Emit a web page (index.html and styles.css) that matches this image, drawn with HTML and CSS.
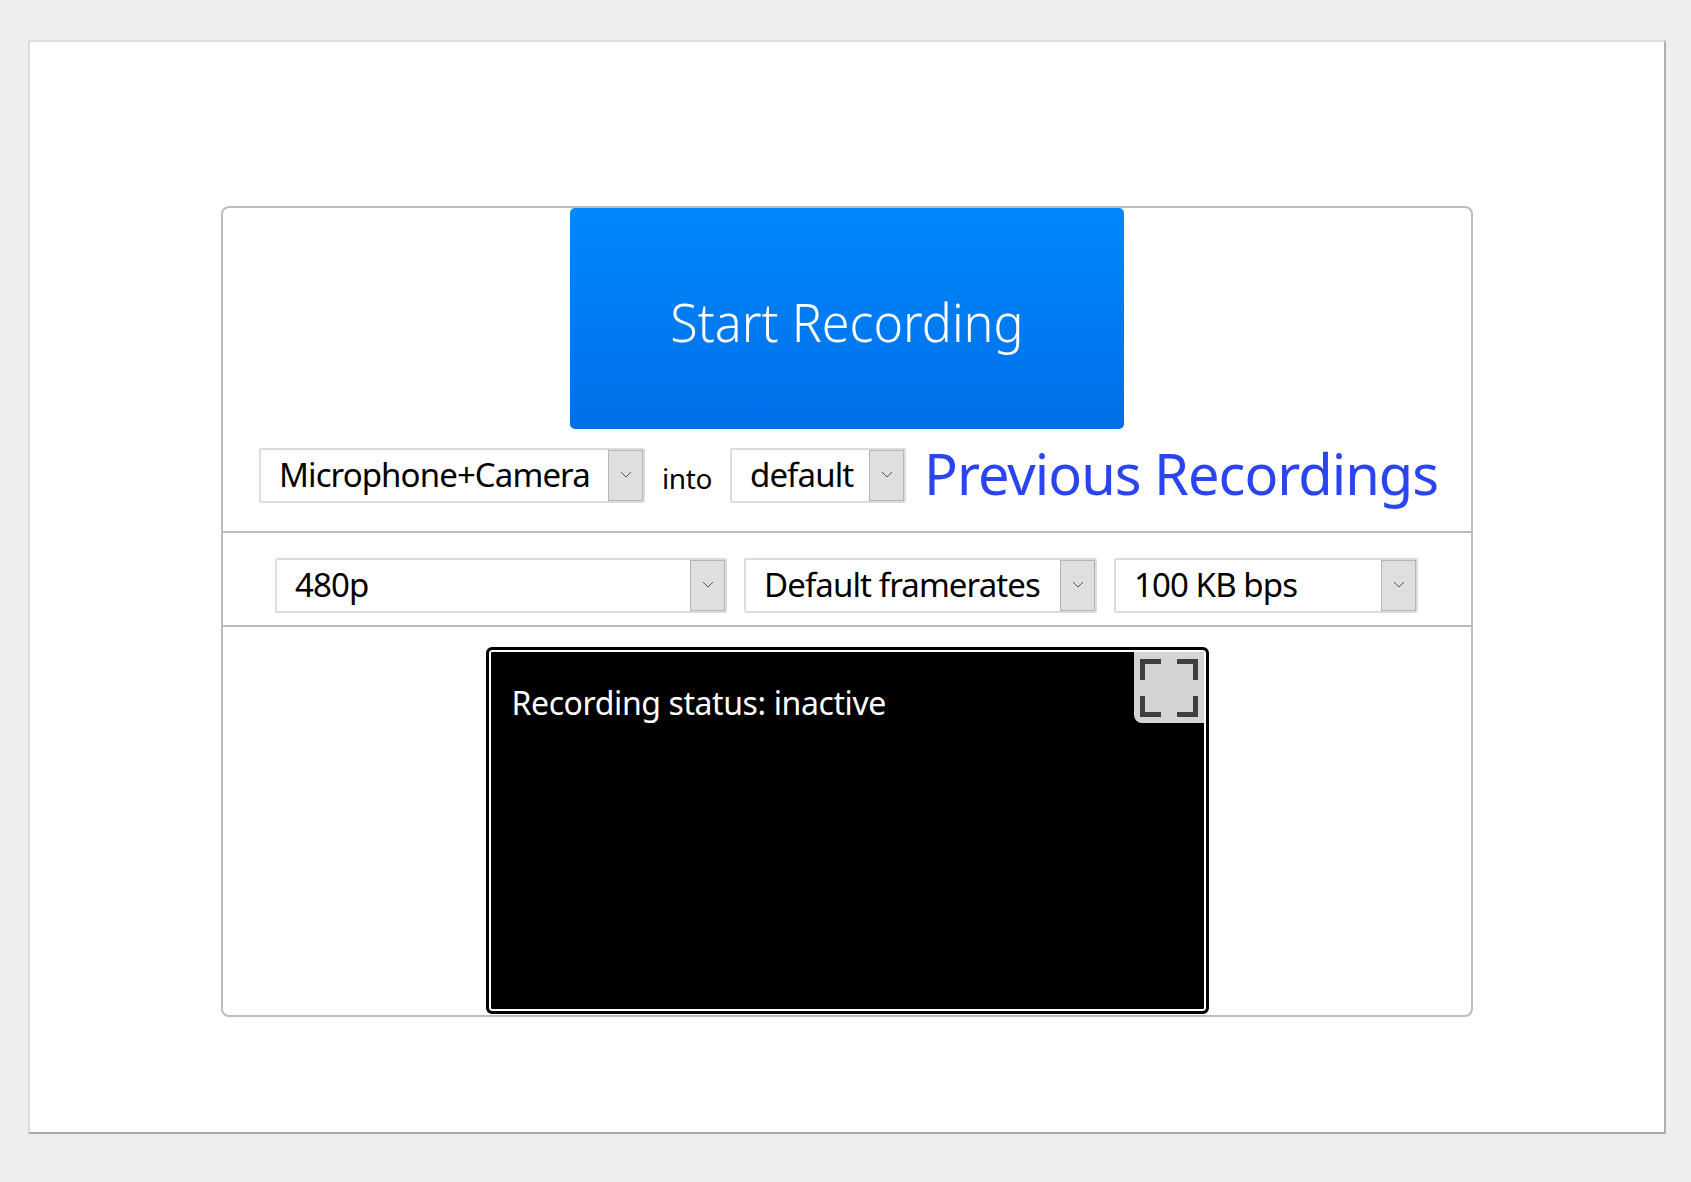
FILE: index.html
```html
<!DOCTYPE html>
<html lang="en">
<head>
<meta charset="utf-8">
<title>Recorder</title>
<link rel="stylesheet" href="styles.css">
</head>
<body>
<main class="sheet">
  <section class="card">
    <div class="top">
      <button class="start" type="button"><span class="start-label">Start Recording</span></button>
      <div class="row row-source">
        <div class="select w-source"><span class="value">Microphone+Camera</span><span class="arrow w-a1"><svg width="12" height="7" viewBox="0 0 12 7"><path d="M1 1l5 5 5-5" fill="none" stroke="#555" stroke-width="1"/></svg></span></div>
        <span class="into">into</span>
        <div class="select w-default"><span class="value">default</span><span class="arrow w-a1"><svg width="12" height="7" viewBox="0 0 12 7"><path d="M1 1l5 5 5-5" fill="none" stroke="#555" stroke-width="1"/></svg></span></div>
        <a class="link" href="#">Previous Recordings</a>
      </div>
    </div>
    <div class="row row-options">
      <div class="select w-res"><span class="value">480p</span><span class="arrow w-a2"><svg width="12" height="7" viewBox="0 0 12 7"><path d="M1 1l5 5 5-5" fill="none" stroke="#555" stroke-width="1"/></svg></span></div>
      <div class="select w-fps"><span class="value">Default framerates</span><span class="arrow w-a2"><svg width="12" height="7" viewBox="0 0 12 7"><path d="M1 1l5 5 5-5" fill="none" stroke="#555" stroke-width="1"/></svg></span></div>
      <div class="select w-bps"><span class="value">100 KB bps</span><span class="arrow w-a2"><svg width="12" height="7" viewBox="0 0 12 7"><path d="M1 1l5 5 5-5" fill="none" stroke="#555" stroke-width="1"/></svg></span></div>
    </div>
    <div class="stage">
      <div class="video">
        <p class="status">Recording status: inactive</p>
        <div class="fullscreen"><svg width="58" height="58" viewBox="0 0 58 58"><path d="M2 21V2h19M37 2h19v19M2 37v19h19M56 37v19H37" fill="none" stroke="#3f3f3f" stroke-width="6"/></svg></div>
      </div>
    </div>
  </section>
</main>
</body>
</html>
```
FILE: styles.css
```css
* { box-sizing: border-box; }
html, body { margin: 0; height: 100%; }
body {
  background: #eeeeee;
  padding: 40px 25px 48px 28px;
  font-family: "Noto Sans", "Open Sans", sans-serif;
  color: #000;
}
.sheet {
  height: 1094px;
  background: #fff;
  border: 2px solid #c4c4c4;
  border-top-color: #dedede;
  border-left-color: #dcdcdc;
  border-right-color: #b0b0b0;
  border-bottom-color: #a8a8a8;
  padding: 164px 72px 0 191px;
}
.card {
  width: 1252px;
  height: 811px;
  border: 2px solid #bdbdbd;
  border-radius: 8px;
  display: flex;
  flex-direction: column;
}
.top {
  height: 325px;
  border-bottom: 2px solid #bdbdbd;
  display: flex;
  flex-direction: column;
  align-items: center;
}
.start {
  width: 554px;
  height: 221px;
  border: 0;
  padding: 0 0 0 0;
  border-radius: 5px;
  background: linear-gradient(#0088fb, #006fe8);
  color: #fff;
  font-family: inherit;
  font-size: 54px;
  font-weight: 300;
  display: flex;
  align-items: center;
  justify-content: center;
}
.start-label { display: block; transform: scaleX(.93); white-space: nowrap; margin-top: 5px; }
.row { display: flex; }
.row-source { width: 100%; padding: 19px 0 0 36px; align-items: flex-start; }
.select {
  height: 55px;
  background: #fff;
  border: 2px solid #dcdcdc;
  border-radius: 2px;
  display: flex;
  justify-content: space-between;
  flex: none;
}
.value {
  font-size: 33px;
  line-height: 50px;
  padding-left: 18px;
  white-space: nowrap;
  letter-spacing: -0.9px;
}
.arrow {
  background: #dfdfdf;
  border: 1px solid #b5b5b5;
  display: flex;
  align-items: center;
  justify-content: center;
  flex: none;
  margin: 0;
}
.arrow svg { display: block; margin-top: -3px; }
.w-a1 { width: 35px; }
.w-a2 { width: 35px; }
.w-source { width: 386px; }
.w-default { width: 176px; }
.w-res { width: 452px; }
.w-fps { width: 353px; }
.w-bps { width: 304px; }
.into {
  font-size: 28px;
  line-height: 60px;
  width: 85px;
  padding-left: 17px;
  letter-spacing: -0.4px;
}
.link {
  font-size: 56px;
  line-height: 50px;
  margin-left: 18px;
  color: #2a45f0;
  text-decoration: none;
  white-space: nowrap;
  letter-spacing: -1px;
}
.row-options {
  height: 94px;
  border-bottom: 2px solid #bdbdbd;
  padding: 25px 0 0 52px;
  gap: 17px;
}
.stage {
  flex: 1;
  display: flex;
  justify-content: center;
  padding-top: 20px;
}
.video {
  width: 723px;
  height: 367px;
  background: #000;
  border: 3px solid #000;
  border-radius: 6px;
  box-shadow: inset 0 0 0 2px #fff;
  position: relative;
  overflow: hidden;
}
.status {
  margin: 0;
  padding: 31px 0 0 23px;
  color: #fff;
  font-size: 32px;
  line-height: 44px;
  letter-spacing: -0.4px;
}
.fullscreen {
  position: absolute;
  top: 2px;
  right: 2px;
  width: 70px;
  height: 71px;
  background: #d4d4d4;
  border-bottom-left-radius: 8px;
  display: flex;
  align-items: center;
  justify-content: center;
}
```
